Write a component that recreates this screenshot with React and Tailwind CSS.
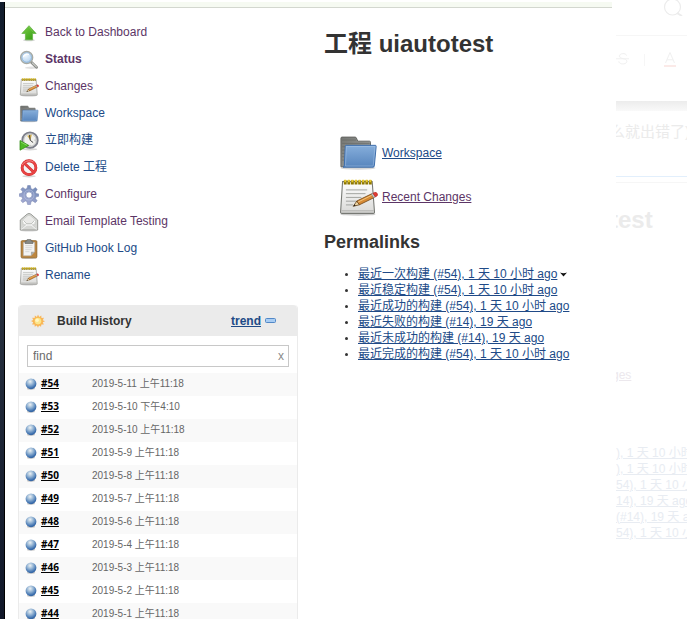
import React from "react";

const LINK = "text-[#204a87]";
const VISITED = "text-[#5c3566]";

function UpIcon({ className }) {
  return (
    <svg viewBox="0 0 24 24" className={className} aria-hidden="true">
      <defs>
        <linearGradient id="up" x1="0" y1="0" x2="1" y2="1">
          <stop offset="0" stopColor="#7fd04b" />
          <stop offset="1" stopColor="#2f9a0e" />
        </linearGradient>
      </defs>
      <ellipse cx="12" cy="20.6" rx="7" ry="1.4" fill="#000" opacity=".16" />
      <path d="M12 3.2 20.6 12.6H16.3V20.2H7.7V12.6H3.4Z" fill="url(#up)" stroke="#5fae40" strokeWidth=".8" strokeLinejoin="round" />
      <path d="M12 5 17.8 11.6" stroke="#a5e37c" strokeWidth=".8" fill="none" opacity=".6" />
    </svg>
  );
}

function SearchIcon({ className }) {
  return (
    <svg viewBox="0 0 24 24" className={className} aria-hidden="true">
      <defs>
        <radialGradient id="lens" cx=".4" cy=".3" r=".8">
          <stop offset="0" stopColor="#f5fbff" />
          <stop offset="1" stopColor="#a5c8ea" />
        </radialGradient>
      </defs>
      <ellipse cx="15" cy="21.3" rx="8" ry="1.4" fill="#000" opacity=".12" />
      <path d="M14.2 14.2 21 20.6" stroke="#858884" strokeWidth="3.4" strokeLinecap="round" />
      <path d="M16 15.6 20.8 20.2" stroke="#c8cac6" strokeWidth="1.5" strokeLinecap="round" />
      <circle cx="9.2" cy="9" r="7.2" fill="url(#lens)" stroke="#a6aaa4" strokeWidth="1.7" />
      <circle cx="9.2" cy="9" r="5.7" fill="none" stroke="#7faad4" strokeWidth=".9" />
      <path d="M5.2 8.6C6 5.5 9.4 4.2 12 5.4" stroke="#fff" strokeWidth="1.5" fill="none" />
    </svg>
  );
}

function NotepadIcon({ className }) {
  return (
    <svg viewBox="0 0 48 48" className={className} aria-hidden="true">
      <defs>
        <linearGradient id="pad" x1="0" y1="0" x2="0" y2="1">
          <stop offset="0" stopColor="#ffffff" />
          <stop offset="1" stopColor="#d9d9d7" />
        </linearGradient>
      </defs>
      <ellipse cx="24" cy="44.6" rx="21" ry="2" fill="#000" opacity=".2" />
      <path d="M5.5 5.5H41L43.8 42Q43.9 43.6 42.3 43.6H4.6Q3 43.6 3.1 42Z" fill="url(#pad)" stroke="#777974" strokeWidth="1.3" />
      <path d="M4.2 40.6H42.8" stroke="#a5a5a2" strokeWidth="1" />
      <path d="M9.5 15.5H35M9.5 20H33M9.5 24.5H28M9.5 29H23M9.5 33.5H18" stroke="#a3a5a1" strokeWidth="1.2" />
      <path d="M7 6.4H40.5" stroke="#8d7600" strokeWidth="5" strokeDasharray="3.4 .9" />
      <path d="M7.5 4.8H40.5" stroke="#e8c92c" strokeWidth="3.2" strokeDasharray="2.3 2" />
      <path d="M18.3 35.2 22.6 28.8 25.8 33.3Z" fill="#ead3a4" stroke="#5c3b12" strokeWidth=".9" />
      <path d="M18.3 35.2 20 32.7 21.3 34.5Z" fill="#26221d" />
      <path d="M22.6 28.8 40.4 20.2 43.3 24.7 25.8 33.3Z" fill="#d78b36" stroke="#754817" strokeWidth="1" />
      <path d="M24 30.1 41 21.7" stroke="#f4c57c" strokeWidth="1.2" />
      <path d="M39.8 20.4 42 19.4 44.8 23.9 42.7 25Z" fill="#c5c7c3" stroke="#777" strokeWidth=".6" />
      <path d="M42 19.4 43.8 18.5Q46.3 18 47.2 20.1T46.3 23.2L44.8 23.9Z" fill="#e33c32" stroke="#a22" strokeWidth=".7" />
    </svg>
  );
}

function FolderIcon({ className }) {
  return (
    <svg viewBox="0 0 48 48" className={className} aria-hidden="true">
      <defs>
        <linearGradient id="folder" x1="0" y1="0" x2="0" y2="1">
          <stop offset="0" stopColor="#86aedb" />
          <stop offset="1" stopColor="#5785bd" />
        </linearGradient>
        <linearGradient id="folderBack" x1="0" y1="0" x2="1" y2="1">
          <stop offset="0" stopColor="#747673" />
          <stop offset="1" stopColor="#a6a8a5" />
        </linearGradient>
      </defs>
      <ellipse cx="24" cy="42" rx="21" ry="2" fill="#000" opacity=".16" />
      <path d="M3.5 40.5V6.2Q3.5 4.9 4.8 4.9H20.5Q21.6 4.9 22 5.9L23.7 9.8H37.7Q39 9.8 39 11.1V40.5Z" fill="url(#folderBack)" stroke="#60625f" strokeWidth="1.1" />
      <path d="M5 8.5H21.5M5 12.5H38M5 16.5H12M5 20.5H9M5 24.5H8M5 28.5H8M5 32.5H7" stroke="#666864" strokeWidth=".8" />
      <path d="M9.8 14.8H44.8Q45.9 14.8 45.8 16L43.6 39.4Q43.5 41 42 41H6Q7.5 40.4 7.6 38.6L8.7 16Q8.8 14.8 9.8 14.8Z" fill="url(#folder)" stroke="#3f6fac" strokeWidth="1.2" />
      <path d="M10 16.2H44.4L42.3 38.8Q42.2 39.6 41.2 39.6H9Z" fill="none" stroke="#b5d0ee" strokeWidth=".8" opacity=".6" />
    </svg>
  );
}

function BuildIcon({ className }) {
  return (
    <svg viewBox="0 0 24 24" className={className} aria-hidden="true">
      <ellipse cx="13" cy="22" rx="9" ry="1.3" fill="#000" opacity=".16" />
      <circle cx="13.2" cy="11" r="9.3" fill="#d9dbd8" stroke="#7c7e8a" strokeWidth="2.2" />
      <circle cx="13.2" cy="11" r="7.4" fill="#f1f1ee" stroke="#b4b6b8" strokeWidth=".8" />
      <path d="M9.8 5.6 15.5 4.2 13.6 11Z" fill="#d6b04a" />
      <path d="M12.6 5.4 13.5 11.2 16.6 13.6" stroke="#454543" strokeWidth="1.2" fill="none" strokeLinecap="round" />
      <path d="M13.2 4.3V5.3M19.7 11H18.7M13.2 17.6V16.7" stroke="#777" strokeWidth=".9" />
      <path d="M1.2 11.4 11.8 17.3 1.2 23Z" fill="#4fba27" stroke="#2f8d12" strokeWidth=".9" strokeLinejoin="round" />
      <path d="M2.3 13.2 9.5 17.2" stroke="#a1e77e" strokeWidth=".8" />
    </svg>
  );
}

function DeleteIcon({ className }) {
  return (
    <svg viewBox="0 0 24 24" className={className} aria-hidden="true">
      <ellipse cx="12" cy="22" rx="8" ry="1.3" fill="#000" opacity=".16" />
      <circle cx="12" cy="11.6" r="8.3" fill="#f5f5f5" stroke="#c92a2a" strokeWidth="3.4" />
      <path d="M6.4 6.2 17.8 17.2" stroke="#c92a2a" strokeWidth="3.2" />
      <circle cx="12" cy="11.6" r="8.3" fill="none" stroke="#e94444" strokeWidth="2.4" />
      <path d="M6.2 6 17.8 17.2" stroke="#e94444" strokeWidth="2.3" />
      <path d="M4 8.4C5.8 3.8 12.8 1.8 17.4 4.7" stroke="#f79a96" strokeWidth=".9" fill="none" />
    </svg>
  );
}

function GearIcon({ className }) {
  return (
    <svg viewBox="0 0 24 24" className={className} aria-hidden="true">
      <defs>
        <linearGradient id="gear" x1=".8" y1="0" x2=".2" y2="1">
          <stop offset="0" stopColor="#6f88b5" />
          <stop offset="1" stopColor="#a8add4" />
        </linearGradient>
      </defs>
      <path
        d="M10.4.6H13.6L14.4 4.4 16.7 5.3 19.7 3.1 21.9 5.3 19.8 8.4 20.6 10.2 23.7 10.7V13.5L20.5 14.2 19.7 16.2 21.8 19 19.5 21.2 16.5 19.1 14.5 19.9 13.8 23.4H10.3L9.5 19.9 7.5 19.1 4.6 21.2 2.3 18.9 4.3 16.2 3.4 14.2.3 13.6V10.6L3.4 10 4.3 7.9 2.2 5.2 4.5 2.9 7.4 5 9.6 4.1Z"
        fill="url(#gear)"
        stroke="#7483b0"
        strokeWidth=".6"
      />
      <circle cx="12" cy="12" r="6" fill="none" stroke="#c7ceea" strokeWidth="1" opacity=".6" />
      <circle cx="12" cy="12" r="3.8" fill="#fff" stroke="#8d99c2" strokeWidth="1" />
    </svg>
  );
}

function MailIcon({ className }) {
  return (
    <svg viewBox="0 0 24 24" className={className} aria-hidden="true">
      <ellipse cx="12" cy="22.4" rx="10.5" ry="1" fill="#000" opacity=".16" />
      <path d="M1.5 9.6 9.7 2.6Q12 .9 14.3 2.6L22.4 9.6V21.6H1.5Z" fill="#d6d7d4" stroke="#92948f" strokeWidth="1.1" strokeLinejoin="round" />
      <path d="M4.7 9.1 10.5 4.4Q12 3.3 13.5 4.4L19.2 9.1V15.2H4.7Z" fill="#eaeae8" stroke="#bfc0bd" strokeWidth=".6" />
      <path d="M2.6 20.8 8.7 15.5H15.3L21.3 20.8M5 10.4 8.7 15.5M19 10.4 15.3 15.5" stroke="#fff" strokeWidth="1.6" fill="none" />
      <path d="M2.8 20.3 8.7 14.7M21.2 20.3 15.3 14.7M5.5 10.2 9 14.1H15L18.4 10.2" stroke="#a5a7a2" strokeWidth=".8" fill="none" />
    </svg>
  );
}

function ClipboardIcon({ className }) {
  return (
    <svg viewBox="0 0 24 24" className={className} aria-hidden="true">
      <ellipse cx="12" cy="23" rx="9.5" ry=".9" fill="#000" opacity=".2" />
      <rect x="2.6" y="2" width="18.8" height="20.6" rx="1.2" fill="#bd863f" stroke="#8f6325" strokeWidth="1" />
      <path d="M5.2 4H18.8V15.4L14.2 20.2H5.2Z" fill="#f4f4f3" stroke="#a9a9a6" strokeWidth=".6" />
      <path d="M18.8 15.4H14.3V20.2Z" fill="#a9aba8" />
      <path d="M7.5 8H16M7.5 10.4H16M7.5 12.8H15M7.5 15.2H12.5" stroke="#c9cbc8" strokeWidth=".8" />
      <path d="M7.3 5.4V3.2Q7.3 2.4 8.1 2.4H9.5V1.2Q9.5.5 10.2.5H13.8Q14.5.5 14.5 1.2V2.4H15.9Q16.7 2.4 16.7 3.2V5.4Z" fill="#888a85" stroke="#5b5d59" strokeWidth=".7" />
    </svg>
  );
}

function SunIcon({ className }) {
  return (
    <svg viewBox="0 0 24 24" className={className} aria-hidden="true">
      <path d="M12 1 14 5.1 17.6 2.5 18 6.9 22.2 6.6 20.2 10.5 24 12.4 20.2 14.3 22 18.2 17.8 17.8 17.2 22 13.7 19.5 12 23.5 10 19.5 6.4 22 6 17.8 1.8 18.2 3.8 14.3 0 12.2 3.8 10.3 2 6.4 6.2 6.7 6.6 2.5 10.2 5.1Z" fill="#f9b75a" />
      <circle cx="12" cy="12.2" r="6.6" fill="#fce68c" stroke="#f6a43a" strokeWidth="1" />
      <circle cx="10.5" cy="10.6" r="3" fill="#fff6c4" />
    </svg>
  );
}

function BallIcon({ className }) {
  return (
    <svg viewBox="0 0 16 16" className={className} aria-hidden="true">
      <defs>
        <radialGradient id="ball" cx=".42" cy=".3" r=".75">
          <stop offset="0" stopColor="#edf2f4" />
          <stop offset=".4" stopColor="#94b4d4" />
          <stop offset=".8" stopColor="#3c6fae" />
          <stop offset="1" stopColor="#2b5a97" />
        </radialGradient>
      </defs>
      <ellipse cx="8" cy="14.2" rx="5.5" ry="1.4" fill="#000" opacity=".2" />
      <circle cx="8" cy="7.7" r="7.2" fill="url(#ball)" />
    </svg>
  );
}

const tasks = [
  { label: "Back to Dashboard", Icon: UpIcon, visited: true },
  { label: "Status", Icon: SearchIcon, visited: true, current: true },
  { label: "Changes", Icon: NotepadIcon, visited: true },
  { label: "Workspace", Icon: FolderIcon },
  { label: "立即构建", Icon: BuildIcon },
  { label: "Delete 工程", Icon: DeleteIcon },
  { label: "Configure", Icon: GearIcon, visited: true },
  { label: "Email Template Testing", Icon: MailIcon, visited: true },
  { label: "GitHub Hook Log", Icon: ClipboardIcon },
  { label: "Rename", Icon: NotepadIcon },
];

const builds = [
  ["#54", "2019-5-11 上午11:18"],
  ["#53", "2019-5-10 下午4:10"],
  ["#52", "2019-5-10 上午11:18"],
  ["#51", "2019-5-9 上午11:18"],
  ["#50", "2019-5-8 上午11:18"],
  ["#49", "2019-5-7 上午11:18"],
  ["#48", "2019-5-6 上午11:18"],
  ["#47", "2019-5-4 上午11:18"],
  ["#46", "2019-5-3 上午11:18"],
  ["#45", "2019-5-2 上午11:18"],
  ["#44", "2019-5-1 上午11:18"],
];

const permalinks = [
  "最近一次构建 (#54), 1 天 10 小时 ago",
  "最近稳定构建 (#54), 1 天 10 小时 ago",
  "最近成功的构建 (#54), 1 天 10 小时 ago",
  "最近失败的构建 (#14), 19 天 ago",
  "最近未成功的构建 (#14), 19 天 ago",
  "最近完成的构建 (#54), 1 天 10 小时 ago",
];

const fadedLinks = [
  "), 1 天 10 小时",
  "), 1 天 10 小时",
  "54), 1 天 10 小时",
  "14), 19 天 ago",
  "(#14), 19 天 ago",
  "54), 1 天 10 小时",
];

function TaskList() {
  return (
    <nav>
      <ul>
        {tasks.map(({ label, Icon, visited, current }) => (
          <li key={label} className="flex h-[27px] items-center">
            <a
              href="#task"
              aria-current={current ? "page" : undefined}
              className={`flex items-center gap-[6px] pl-px ${visited ? VISITED : LINK} ${current ? "font-bold" : ""}`}
            >
              <Icon className="size-5 shrink-0" />
              <span className="pb-px">{label}</span>
            </a>
          </li>
        ))}
      </ul>
    </nav>
  );
}

function BuildHistory() {
  return (
    <section className="mt-4 rounded-t border-x border-[#ebebeb]">
      <header className="flex h-[31px] items-center rounded-t bg-[#ebebeb] pl-3">
        <SunIcon className="size-[14px]" />
        <h2 className="ml-3 font-bold">Build History</h2>
        <a href="#trend" className={`ml-auto font-bold underline ${LINK}`}>trend</a>
        <button type="button" aria-label="Collapse" className="ml-1 mr-[21px]">
          <svg viewBox="0 0 11 5" className="block h-[5px] w-[11px]" aria-hidden="true">
            <rect x=".5" y=".5" width="10" height="4" rx="1" fill="#a9cdf3" stroke="#5288c7" />
          </svg>
        </button>
      </header>
      <div className="px-2 pb-[6px] pt-[9px]">
        <div className="flex h-[22px] items-center border border-[#c8c8c8] px-1 pb-px">
          <input
            aria-label="find"
            placeholder="find"
            className="min-w-0 flex-1 bg-transparent pl-px outline-none placeholder:text-[#6b6b6b]"
          />
          <button type="button" aria-label="Clear" className="leading-4 text-[#8a8a8a]">x</button>
        </div>
      </div>
      <table className="w-full">
        <tbody>
          {builds.map(([id, date]) => (
            <tr key={id} className="h-[23px] odd:bg-[#f9f9f9]">
              <td className="w-[22px] p-0 pb-px pl-[6px]">
                <BallIcon className="block size-3" />
              </td>
              <td className="w-[51px] p-0 pb-1">
                <a
                  href="#build"
                  className="block font-['Open_Sans',sans-serif] text-[10px] font-bold leading-4 text-black underline"
                >
                  {id}
                </a>
              </td>
              <td className="p-0 pb-[2px] text-[10px] leading-4 text-[#666]">{date}</td>
            </tr>
          ))}
        </tbody>
      </table>
    </section>
  );
}

function Project() {
  return (
    <main className="min-w-0 flex-1 whitespace-nowrap pt-5">
      <h1 className="text-2xl font-bold">工程 uiautotest</h1>
      <ul className="ml-[14px] mt-[71px]">
        <li className="flex h-11 items-center gap-1">
          <FolderIcon className="size-10" />
          <a href="#workspace" className={`underline ${LINK}`}>Workspace</a>
        </li>
        <li className="flex h-11 items-center gap-1">
          <NotepadIcon className="size-10" />
          <a href="#changes" className={`underline ${VISITED}`}>Recent Changes</a>
        </li>
      </ul>
      <h2 className="mt-[9px] text-lg font-bold">Permalinks</h2>
      <ul className="mt-[10px] list-disc pl-[34px]">
        {permalinks.map((text, i) => (
          <li key={text} className="h-4 marker:text-[10px]">
            <a href="#permalink" className={`underline ${LINK}`}>{text}</a>
            {i === 0 && (
              <button type="button" aria-label="More" className="ml-[3px] align-middle">
                <svg viewBox="0 0 7 5" className="block h-[5px] w-[7px]" aria-hidden="true">
                  <path d="M0 .5Q3.5 2 7 .5L3.5 4.5Z" fill="#111" />
                </svg>
              </button>
            )}
          </li>
        ))}
      </ul>
    </main>
  );
}

function FadedPanel() {
  return (
    <aside className="w-[71px] shrink-0 overflow-hidden whitespace-nowrap">
      <div className="flex h-9 items-start justify-end border-b border-[#f6f6f6] pr-1">
        <svg viewBox="0 0 20 20" className="-mt-1 size-5" fill="none" stroke="#ececec" aria-hidden="true">
          <circle cx="9.5" cy="11" r="8" strokeWidth="1.2" />
          <path d="M14 17 19 20" strokeWidth="2" />
        </svg>
      </div>
      <div className="flex h-[65px] items-start pt-[14px] text-[#f0f0f0]">
        <svg viewBox="0 0 14 18" className="h-[18px] w-[14px]" fill="none" stroke="currentColor" aria-hidden="true">
          <path d="M10.5 5.5C10 2.8 3.5 2.8 3.5 6.2 3.5 9.5 10.8 7.6 10.8 11.4 10.8 14.8 3 14.8 2.8 11.3M0 8.8H13" />
        </svg>
        <span className="ml-[14px] mt-1 h-3 w-px bg-[#f6f6f6]" />
        <svg viewBox="0 0 14 18" className="ml-[18px] h-[18px] w-[14px]" fill="none" stroke="currentColor" aria-hidden="true">
          <path d="M2.5 13 7 2.5 11.5 13M4 9.8H10" />
          <path d="M1 16H13" stroke="#fbeae8" strokeWidth="2" />
        </svg>
      </div>
      <div className="h-[10px] bg-gradient-to-b from-[#ececec] to-[#f9f9f9]" />
      <p className="-ml-[6px] mt-[11px] h-[54px] text-[15px] leading-5 text-[#ebebeb]">么就出错了)</p>
      <div className="h-[7px] border-y border-t-[#e2effc] border-b-[#f6f6f6]" />
      <p className="-ml-[6px] mt-[21px] text-2xl font-bold text-[#ebebeb]">test</p>
      <p className="-ml-1 mt-[131px] text-[#ece8ed] underline">ges</p>
      <ul className="mt-[62px] text-[#e8ecf2]">
        {fadedLinks.map((text, i) => (
          <li key={i} className="h-4 underline">{text}</li>
        ))}
      </ul>
    </aside>
  );
}

export default function App() {
  return (
    <div className="flex h-screen overflow-hidden bg-white font-['Liberation_Sans','Noto_Sans_CJK_SC',sans-serif] text-xs leading-4 text-[#333]">
      <div className="mt-0.5 w-[5px] shrink-0 border-r border-black bg-gradient-to-b from-[#111c2c] via-[#27303f] to-[#101729]" />
      <div className="mr-1 flex min-w-0 flex-1 flex-col">
        <div className="mt-0.5 h-[6px] shrink-0 border-b border-[#d3d7cf] bg-[#f6faf2]" />
        <div className="flex gap-[26px] pl-[13px]">
          <div className="w-[280px] shrink-0 pt-[11px]">
            <TaskList />
            <BuildHistory />
          </div>
          <Project />
        </div>
      </div>
      <FadedPanel />
    </div>
  );
}
